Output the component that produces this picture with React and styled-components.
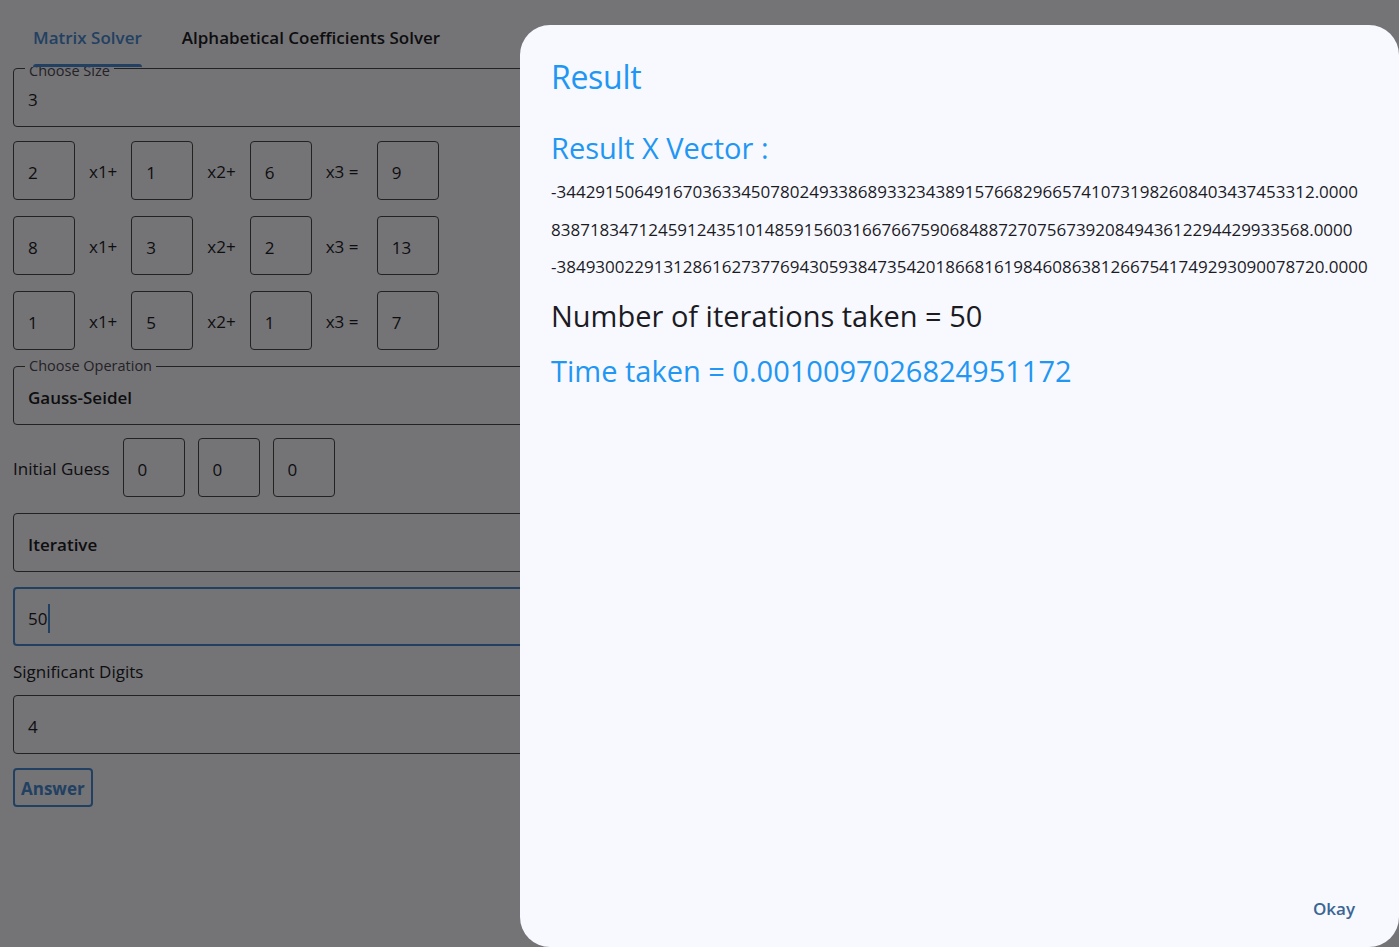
import React from 'react';
import styled, { createGlobalStyle } from 'styled-components';

const PAGE_BG = '#e8e8ee';
const PRIMARY = '#4582c4';

const GlobalStyle = createGlobalStyle`
  html, body { margin: 0; padding: 0; }
  body {
    background: ${PAGE_BG};
    font-family: "Open Sans", "Noto Sans", sans-serif;
    color: #1c1b1f;
    overflow: hidden;
  }
`;

const vector = [
  '-344291506491670363345078024933868933234389157668296657410731982608403437453312.0000',
  '838718347124591243510148591560316676675906848872707567392084943612294429933568.0000',
  '-3849300229131286162737769430593847354201866816198460863812667541749293090078720.0000',
];

const rows = [
  ['2', '1', '6', '9'],
  ['8', '3', '2', '13'],
  ['1', '5', '1', '7'],
];

export default function App() {
  return (
    <>
      <GlobalStyle />
      <Page>
        <TabBar>
          <Tab $active>Matrix Solver</Tab>
          <Tab>Alphabetical Coefficients Solver</Tab>
        </TabBar>

        <Field $mt={1}>
          <FieldLabel $low>Choose Size</FieldLabel>
          3
        </Field>

        {rows.map((r, i) => (
          <EqRow key={i} $mt={i === 0 ? 14 : 16}>
            <Field $w={62}>{r[0]}</Field>
            <VarLabel>x1+</VarLabel>
            <Field $w={62}>{r[1]}</Field>
            <VarLabel>x2+</VarLabel>
            <Field $w={62}>{r[2]}</Field>
            <VarLabel>{'x3 = '}</VarLabel>
            <Field $w={62}>{r[3]}</Field>
          </EqRow>
        ))}

        <Field $mt={16} $bold>
          <FieldLabel>Choose Operation</FieldLabel>
          Gauss-Seidel
        </Field>

        <GuessRow $mt={13}>
          <PlainLabel>Initial Guess</PlainLabel>
          <Field $w={62}>0</Field>
          <Field $w={62}>0</Field>
          <Field $w={62}>0</Field>
        </GuessRow>

        <Field $mt={16} $bold>Iterative</Field>

        <Field $mt={15} $focused>
          50<Caret />
        </Field>

        <PlainLabel $mt={12}>Significant Digits</PlainLabel>

        <Field $mt={11}>4</Field>

        <AnswerButton>Answer</AnswerButton>
      </Page>

      <Backdrop />

      <Dialog>
        <DialogBody>
          <Title>Result</Title>
          <Heading $mt={31}>Result X Vector :</Heading>
          <Numbers>
            {vector.map((v) => (
              <NumLine key={v}>{v}</NumLine>
            ))}
          </Numbers>
          <Heading $mt={10} $dark>Number of iterations taken = 50</Heading>
          <Heading $mt={15}>Time taken = 0.0010097026824951172</Heading>
        </DialogBody>
        <Actions>
          <TextButton>Okay</TextButton>
        </Actions>
      </Dialog>
    </>
  );
}

const Page = styled.div`
  display: flex;
  flex-direction: column;
  padding: 0 13px;
  width: 100%;
  box-sizing: border-box;
  min-height: 100vh;
`;

const TabBar = styled.div`
  position: relative;
  z-index: 1;
  display: flex;
  height: 67px;
  background: ${PAGE_BG};
`;

const Tab = styled.div`
  position: relative;
  padding: 26px 20px 0;
  line-height: 24px;
  font-size: 17px;
  font-weight: 600;
  color: ${(p) => (p.$active ? PRIMARY : '#1c1b1f')};

  &::after {
    content: '';
    display: ${(p) => (p.$active ? 'block' : 'none')};
    position: absolute;
    left: 20px;
    right: 20px;
    bottom: 0;
    height: 3px;
    border-radius: 3px 3px 0 0;
    background: ${PRIMARY};
  }
`;

const Field = styled.div`
  position: relative;
  box-sizing: border-box;
  flex: none;
  width: ${(p) => (p.$w ? `${p.$w}px` : '100%')};
  height: 59px;
  margin-top: ${(p) => p.$mt || 0}px;
  padding: 4px ${(p) => (p.$focused ? 13 : 14)}px 0;
  border: ${(p) => (p.$focused ? `2px solid ${PRIMARY}` : '1px solid #444')};
  border-radius: 4px;
  display: flex;
  align-items: center;
  font-size: 17px;
  font-weight: ${(p) => (p.$bold ? 600 : 400)};
`;

const FieldLabel = styled.span`
  position: absolute;
  top: ${(p) => (p.$low ? -6 : -9)}px;
  left: 11px;
  padding: 0 4px;
  background: ${PAGE_BG};
  font-size: 14.5px;
  font-weight: 400;
  line-height: 16px;
  color: #49454f;
`;

const Caret = styled.span`
  display: inline-block;
  width: 2px;
  height: 29px;
  margin-left: 1px;
  background: ${PRIMARY};
`;

const EqRow = styled.div`
  display: flex;
  align-items: center;
  gap: 14px;
  margin-top: ${(p) => p.$mt || 0}px;
`;

const GuessRow = styled(EqRow)`
  gap: 13px;
`;

const VarLabel = styled.span`
  padding-top: 2px;
  font-size: 17px;
  white-space: pre;
  color: #1c1b1f;
`;

const PlainLabel = styled.div`
  font-size: 17px;
  line-height: 24px;
  margin-top: ${(p) => p.$mt || 0}px;
  padding-top: 2px;
  color: #1c1b1f;
`;

const AnswerButton = styled.button`
  align-self: flex-start;
  margin-top: 14px;
  height: 39px;
  padding: 2px 6px 0;
  border: 2px solid ${PRIMARY};
  border-radius: 4px;
  background: transparent;
  font-family: inherit;
  font-size: 17px;
  font-weight: 700;
  color: ${PRIMARY};
`;

const Backdrop = styled.div`
  position: fixed;
  inset: 0;
  z-index: 10;
  background: rgba(0, 0, 0, 0.5);
`;

const Dialog = styled.div`
  position: fixed;
  z-index: 11;
  left: 520px;
  top: 25px;
  right: 0;
  bottom: 0;
  box-sizing: border-box;
  display: flex;
  flex-direction: column;
  padding: 32px 32px 21px 31px;
  border-radius: 30px;
  background: #f7f9ff;
`;

const DialogBody = styled.div`
  flex: 1;
`;

const Title = styled.h2`
  margin: 0;
  font-size: 32px;
  font-weight: 400;
  line-height: 40px;
  letter-spacing: -0.3px;
  color: #2196f3;
`;

const Heading = styled.div`
  margin-top: ${(p) => p.$mt || 0}px;
  font-size: 29px;
  line-height: 40px;
  color: ${(p) => (p.$dark ? '#1c1b1f' : '#2196f3')};
  white-space: nowrap;
`;

const Numbers = styled.div`
  margin-top: 5px;
`;

const NumLine = styled.div`
  font-size: 17px;
  line-height: 37.5px;
  white-space: nowrap;
  color: #1c1b1f;
`;

const Actions = styled.div`
  display: flex;
  justify-content: flex-end;
`;

const TextButton = styled.button`
  height: 36px;
  padding: 0 12px;
  border: none;
  background: none;
  font-family: inherit;
  font-size: 17px;
  font-weight: 600;
  color: #3a6594;
`;
